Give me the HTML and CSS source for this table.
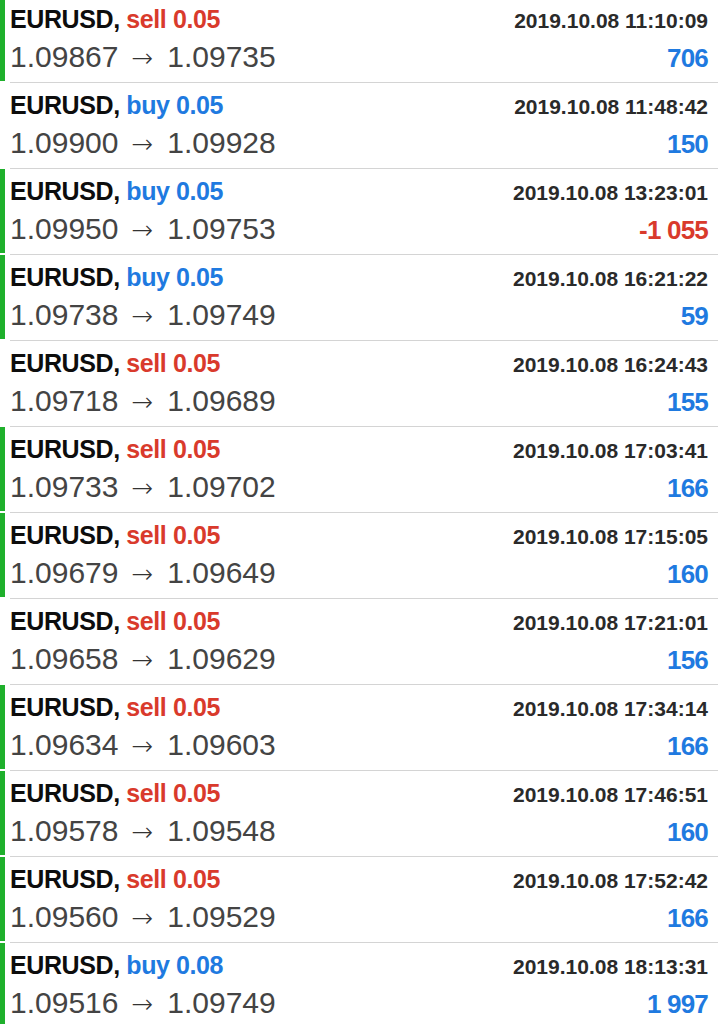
FILE: index.html
```html
<!DOCTYPE html>
<html lang="en">
<head>
<meta charset="utf-8">
<title>Trade history</title>
<link rel="stylesheet" href="styles.css">
</head>
<body>
<ul class="trades">
  <li class="trade fresh"><span class="mark"></span><div class="body">
    <div class="line top"><span class="deal"><span class="sym">EURUSD,</span> <span class="type sell">sell 0.05</span></span><span class="time">2019.10.08 11:10:09</span></div>
    <div class="line bottom"><span class="prices">1.09867<span class="arrow">→</span>1.09735</span><span class="profit pos">706</span></div>
  </div></li>
  <li class="trade"><span class="mark"></span><div class="body">
    <div class="line top"><span class="deal"><span class="sym">EURUSD,</span> <span class="type buy">buy 0.05</span></span><span class="time">2019.10.08 11:48:42</span></div>
    <div class="line bottom"><span class="prices">1.09900<span class="arrow">→</span>1.09928</span><span class="profit pos">150</span></div>
  </div></li>
  <li class="trade fresh"><span class="mark"></span><div class="body">
    <div class="line top"><span class="deal"><span class="sym">EURUSD,</span> <span class="type buy">buy 0.05</span></span><span class="time">2019.10.08 13:23:01</span></div>
    <div class="line bottom"><span class="prices">1.09950<span class="arrow">→</span>1.09753</span><span class="profit neg">-1 055</span></div>
  </div></li>
  <li class="trade fresh"><span class="mark"></span><div class="body">
    <div class="line top"><span class="deal"><span class="sym">EURUSD,</span> <span class="type buy">buy 0.05</span></span><span class="time">2019.10.08 16:21:22</span></div>
    <div class="line bottom"><span class="prices">1.09738<span class="arrow">→</span>1.09749</span><span class="profit pos">59</span></div>
  </div></li>
  <li class="trade"><span class="mark"></span><div class="body">
    <div class="line top"><span class="deal"><span class="sym">EURUSD,</span> <span class="type sell">sell 0.05</span></span><span class="time">2019.10.08 16:24:43</span></div>
    <div class="line bottom"><span class="prices">1.09718<span class="arrow">→</span>1.09689</span><span class="profit pos">155</span></div>
  </div></li>
  <li class="trade fresh"><span class="mark"></span><div class="body">
    <div class="line top"><span class="deal"><span class="sym">EURUSD,</span> <span class="type sell">sell 0.05</span></span><span class="time">2019.10.08 17:03:41</span></div>
    <div class="line bottom"><span class="prices">1.09733<span class="arrow">→</span>1.09702</span><span class="profit pos">166</span></div>
  </div></li>
  <li class="trade fresh"><span class="mark"></span><div class="body">
    <div class="line top"><span class="deal"><span class="sym">EURUSD,</span> <span class="type sell">sell 0.05</span></span><span class="time">2019.10.08 17:15:05</span></div>
    <div class="line bottom"><span class="prices">1.09679<span class="arrow">→</span>1.09649</span><span class="profit pos">160</span></div>
  </div></li>
  <li class="trade"><span class="mark"></span><div class="body">
    <div class="line top"><span class="deal"><span class="sym">EURUSD,</span> <span class="type sell">sell 0.05</span></span><span class="time">2019.10.08 17:21:01</span></div>
    <div class="line bottom"><span class="prices">1.09658<span class="arrow">→</span>1.09629</span><span class="profit pos">156</span></div>
  </div></li>
  <li class="trade fresh"><span class="mark"></span><div class="body">
    <div class="line top"><span class="deal"><span class="sym">EURUSD,</span> <span class="type sell">sell 0.05</span></span><span class="time">2019.10.08 17:34:14</span></div>
    <div class="line bottom"><span class="prices">1.09634<span class="arrow">→</span>1.09603</span><span class="profit pos">166</span></div>
  </div></li>
  <li class="trade fresh"><span class="mark"></span><div class="body">
    <div class="line top"><span class="deal"><span class="sym">EURUSD,</span> <span class="type sell">sell 0.05</span></span><span class="time">2019.10.08 17:46:51</span></div>
    <div class="line bottom"><span class="prices">1.09578<span class="arrow">→</span>1.09548</span><span class="profit pos">160</span></div>
  </div></li>
  <li class="trade fresh"><span class="mark"></span><div class="body">
    <div class="line top"><span class="deal"><span class="sym">EURUSD,</span> <span class="type sell">sell 0.05</span></span><span class="time">2019.10.08 17:52:42</span></div>
    <div class="line bottom"><span class="prices">1.09560<span class="arrow">→</span>1.09529</span><span class="profit pos">166</span></div>
  </div></li>
  <li class="trade fresh"><span class="mark"></span><div class="body">
    <div class="line top"><span class="deal"><span class="sym">EURUSD,</span> <span class="type buy">buy 0.08</span></span><span class="time">2019.10.08 18:13:31</span></div>
    <div class="line bottom"><span class="prices">1.09516<span class="arrow">→</span>1.09749</span><span class="profit pos">1 997</span></div>
  </div></li>
</ul>
</body>
</html>
```

FILE: styles.css
```css
html, body {
  margin: 0;
  padding: 0;
  background: #ffffff;
  overflow: hidden;
}

body {
  font-family: "Liberation Sans", Arial, sans-serif;
  color: #111;
}

.trades {
  list-style: none;
  margin: -3px 0 0 0;
  padding: 0;
}

.trade {
  display: flex;
  height: 86px;
}

.mark {
  width: 5px;
  flex: none;
  margin-bottom: 2px;
}

.trade.fresh .mark {
  background: #1fb02c;
}

.body {
  flex: 1;
  margin-left: 5px;
  padding: 4px 10px 0 0;
  border-bottom: 1px solid #d4d4d4;
  box-sizing: border-box;
}

.line {
  display: flex;
  justify-content: space-between;
  align-items: baseline;
  white-space: nowrap;
}

.line.top {
  height: 36px;
  line-height: 36px;
}

.line.bottom {
  height: 40px;
  line-height: 40px;
}

.deal {
  font-size: 25px;
  font-weight: 700;
  letter-spacing: -0.4px;
}

.sym {
  color: #0d0d0d;
}

.type.sell {
  color: #d93a2c;
}

.type.buy {
  color: #1f7ae0;
}

.time {
  font-size: 21px;
  font-weight: 700;
  letter-spacing: 0;
  color: #2a2a2a;
}

.prices {
  font-size: 30px;
  font-weight: 400;
  color: #444;
}

.arrow {
  font-family: "DejaVu Sans", sans-serif;
  font-weight: 200;
  font-size: 26px;
  margin: 0 14px 0 13px;
  color: #333;
}

.profit {
  font-size: 26px;
  font-weight: 700;
  letter-spacing: -0.8px;
}

.profit.pos {
  color: #1f7ae0;
}

.profit.neg {
  color: #d93a2c;
}
```
